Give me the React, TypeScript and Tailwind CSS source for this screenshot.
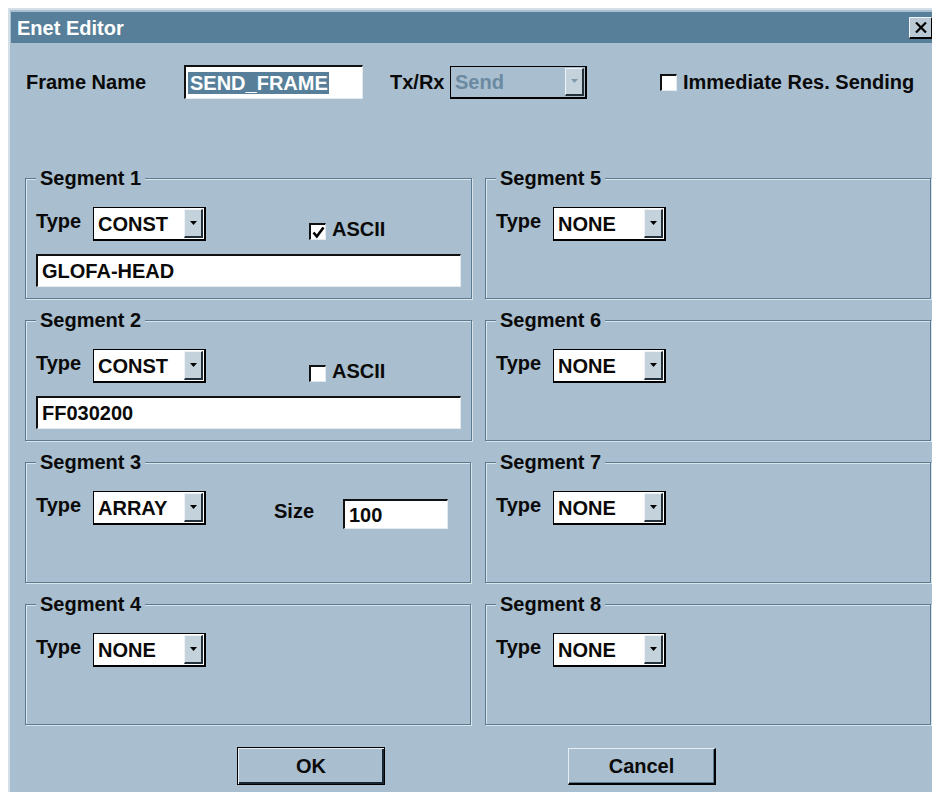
import type { ReactNode } from "react"

type ComboProps = {
  value: string
  width: string
  height?: string
  disabled?: boolean
}

type SegmentProps = {
  title: string
  children: ReactNode
}

const fontClassName = "font-['Liberation_Sans',Arial,sans-serif] text-[20px] font-bold leading-[22px] text-[#0a0a0a]"

function DropButton({ disabled }: { disabled?: boolean }) {
  return (
    <span className="flex h-full w-[19px] items-center justify-center border-t border-l border-t-[#eef3f7] border-l-[#eef3f7] border-r-2 border-b-2 border-r-[#24313a] border-b-[#24313a] bg-[#c4d2dc]">
      <svg width="7" height="4" viewBox="0 0 7 4">
        <path d="M0 0h7L3.5 4z" fill={disabled ? "#7f98aa" : "#000"} />
      </svg>
    </span>
  )
}

function Combo({ value, width, height = "h-[34px]", disabled }: ComboProps) {
  return (
    <div
      className={`flex shrink-0 items-stretch border border-r-2 border-b-2 border-black py-[1px] pr-[1px] pl-[4px] ${width} ${height} ${
        disabled ? "bg-transparent text-[#6b8aa2]" : "bg-white"
      }`}
    >
      <span className="flex flex-1 items-center">{value}</span>
      <DropButton disabled={disabled} />
    </div>
  )
}

function TextBox({ children, className }: { children: ReactNode; className: string }) {
  return (
    <div
      className={`flex shrink-0 items-center border-t-2 border-l-2 border-t-[#111] border-l-[#111] border-r border-b border-r-[#e2eaf0] border-b-[#e2eaf0] bg-white pl-[2px] ${className}`}
    >
      {children}
    </div>
  )
}

function CheckBox({ checked }: { checked?: boolean }) {
  return (
    <span className="flex h-[17px] w-[17px] shrink-0 items-center justify-center border-t-2 border-l-2 border-t-[#111] border-l-[#111] border-r border-b border-r-[#e2eaf0] border-b-[#e2eaf0] bg-white">
      {checked ? (
        <svg width="13" height="13" viewBox="0 0 13 13">
          <path d="M1.5 6.5l3.3 4 6.7-9" stroke="#000" strokeWidth="2.6" fill="none" />
        </svg>
      ) : null}
    </span>
  )
}

function Segment({ title, children }: SegmentProps) {
  return (
    <fieldset className="h-[132px] border border-[#5d7b90] px-[10px] pt-[18px] shadow-[inset_1px_1px_0_#dbe5ec,1px_1px_0_#dbe5ec]">
      <legend className="bg-[#a9bece] px-[4px] leading-[22px]">{title}</legend>
      {children}
    </fieldset>
  )
}

function TypeRow({ value, children }: { value: string; children?: ReactNode }) {
  return (
    <div className="flex items-start">
      <span className="mt-[3px] w-[57px] shrink-0">Type</span>
      <Combo value={value} width="w-[113px]" />
      {children}
    </div>
  )
}

function EmptySegment({ title }: { title: string }) {
  return (
    <Segment title={title}>
      <TypeRow value="NONE" />
    </Segment>
  )
}

export default function App() {
  return (
    <div className={`h-[792px] w-[932px] overflow-hidden bg-white pt-[8px] pl-[8px] ${fontClassName}`}>
      <div className="h-[800px] w-[928px] border-t-2 border-l-2 border-t-[#d3dee6] border-l-[#d3dee6] bg-[#a9bece]">
        {/* title bar */}
        <div className="mt-[2px] ml-[1px] flex h-[31px] items-center justify-between bg-[#587f9a] pl-[6px] text-white">
          <span>Enet Editor</span>
          <span className="mr-[3px] flex h-[22px] w-[24px] items-center justify-center border-t border-l border-t-[#eef3f7] border-l-[#eef3f7] border-r-2 border-b-2 border-r-black border-b-black bg-[#b8c9d5]">
            <svg width="12" height="11" viewBox="0 0 12 11">
              <path d="M1 0.5l10 10M11 0.5l-10 10" stroke="#000" strokeWidth="2.2" />
            </svg>
          </span>
        </div>

        {/* frame name row */}
        <div className="mt-[22px] flex items-center pl-[16px]">
          <span className="w-[158px] shrink-0">Frame Name</span>
          <TextBox className="h-[34px] w-[179px]">
            <span className="bg-[#587f9a] pr-[1px] pl-[2px] text-white">SEND_FRAME</span>
          </TextBox>
          <span className="ml-[27px] w-[60px] shrink-0">Tx/Rx</span>
          <Combo value="Send" width="w-[137px]" height="h-[33px]" disabled />
          <span className="ml-[73px]">
            <CheckBox />
          </span>
          <span className="ml-[6px]">Immediate Res. Sending</span>
        </div>

        {/* segments */}
        <div className="mt-[68px] flex gap-[14px] pl-[15px]">
          <div className="flex w-[446px] flex-col gap-[10px]">
            <Segment title="Segment 1">
              <TypeRow value="CONST">
                <span className="mt-[16px] ml-[103px]">
                  <CheckBox checked />
                </span>
                <span className="mt-[11px] ml-[6px]">ASCII</span>
              </TypeRow>
              <TextBox className="mt-[13px] h-[33px] w-[425px]">
                <span className="pl-[2px]">GLOFA-HEAD</span>
              </TextBox>
            </Segment>
            <Segment title="Segment 2">
              <TypeRow value="CONST">
                <span className="mt-[16px] ml-[103px]">
                  <CheckBox />
                </span>
                <span className="mt-[11px] ml-[6px]">ASCII</span>
              </TypeRow>
              <TextBox className="mt-[13px] h-[33px] w-[425px]">
                <span className="pl-[2px]">FF030200</span>
              </TextBox>
            </Segment>
            <Segment title="Segment 3">
              <TypeRow value="ARRAY">
                <span className="mt-[9px] ml-[68px] w-[69px] shrink-0">Size</span>
                <TextBox className="mt-[8px] h-[30px] w-[105px]">
                  <span className="pl-[2px]">100</span>
                </TextBox>
              </TypeRow>
            </Segment>
            <EmptySegment title="Segment 4" />
          </div>
          <div className="flex w-[446px] flex-col gap-[10px]">
            <EmptySegment title="Segment 5" />
            <EmptySegment title="Segment 6" />
            <EmptySegment title="Segment 7" />
            <EmptySegment title="Segment 8" />
          </div>
        </div>

        {/* dialog buttons */}
        <div className="mt-[22px] flex items-start pl-[227px]">
          <button
            type="button"
            className="flex h-[38px] w-[148px] items-center justify-center border border-black bg-[#a9bece] shadow-[inset_1px_1px_0_#e6eef3,inset_-2px_-2px_0_#1b2730]"
          >
            OK
          </button>
          <button
            type="button"
            className="mt-[1px] ml-[183px] flex h-[37px] w-[148px] items-center justify-center border-t border-l border-t-[#e6eef3] border-l-[#e6eef3] border-r-2 border-b-2 border-r-black border-b-black bg-[#a9bece] shadow-[inset_-1px_-1px_0_#5d7b90]"
          >
            Cancel
          </button>
        </div>
      </div>
    </div>
  )
}
